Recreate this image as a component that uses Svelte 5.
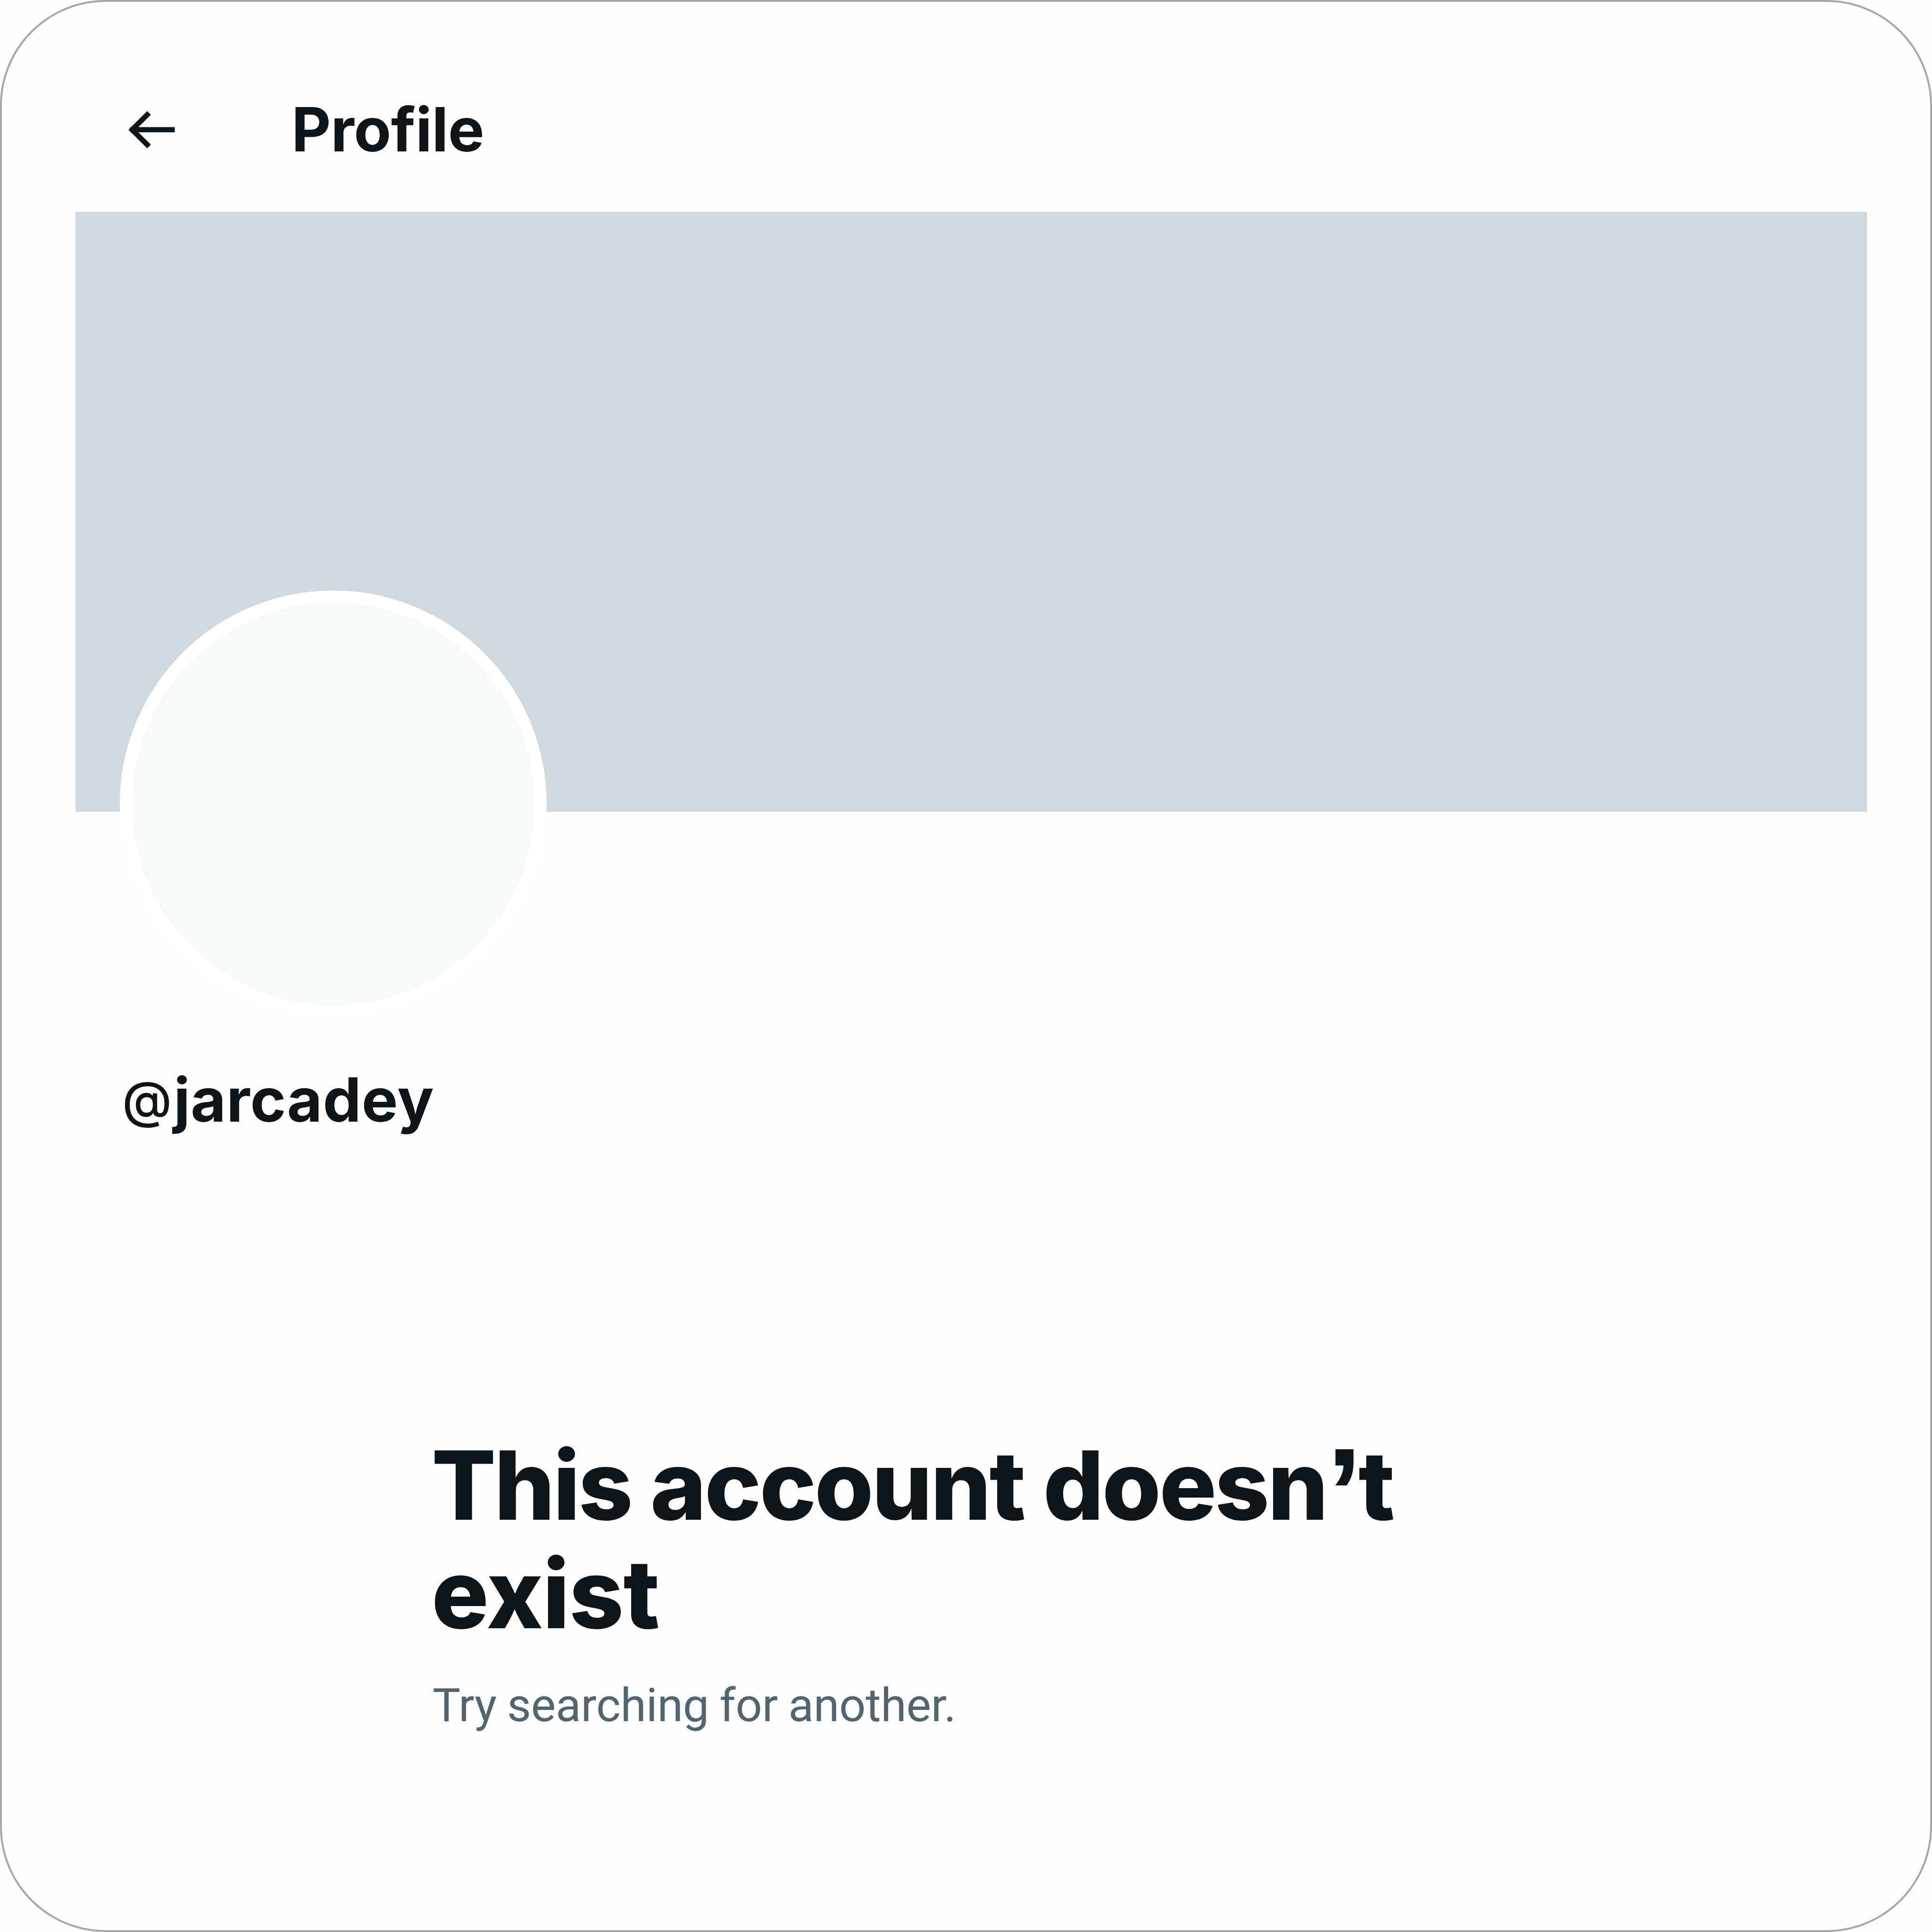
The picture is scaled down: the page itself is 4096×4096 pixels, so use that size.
<script>
  const name = 'jarcadey';
</script>

<main class="card">
  <header class="topbar">
    <svg class="back" viewBox="0 0 104 84" role="img" aria-label="Back">
      <path d="M5 42H99.500M45 6.500L9 42L45 77.500" />
    </svg>
    <h1>Profile</h1>
  </header>

  <div class="banner"></div>

  <section class="identity">
    <div class="avatar"></div>
    <h2><span class="at">@</span>{name}</h2>
  </section>

  <section class="empty">
    <h3>This account doesn<span class="quote">’</span>t <span class="loose">exist</span></h3>
    <p>Try searching for another.</p>
  </section>
</main>

<style>
  :global(body) {
    background: #fefefe;
  }

  .card {
    box-sizing: border-box;
    display: flex;
    flex-direction: column;
    width: 4096px;
    height: 4096px;
    overflow: hidden;
    padding: 0 134px 0 156px;
    border: 4.4px solid #a6a6a6;
    border-radius: 224px;
    background: #fefefe;
    color: #0f1419;
    font-family: Inter, Roboto, sans-serif;
  }

  h1,
  h2,
  h3,
  p {
    margin: 0;
  }

  .topbar {
    box-sizing: border-box;
    display: flex;
    flex: none;
    align-items: flex-start;
    height: 445px;
    padding: 190px 0 0 111px;
  }

  .back {
    width: 104px;
    height: 84px;
    margin-top: 39px;
    fill: none;
    stroke: #0f1419;
    stroke-width: 11;
  }

  h1 {
    margin-left: 243px;
    font-size: 129px;
    font-weight: 700;
    line-height: 160px;
    letter-spacing: -0.400px;
  }

  .banner {
    flex: none;
    height: 1271.500px;
    background: #d1d9df;
  }

  .identity {
    display: flex;
    flex: none;
    flex-direction: column;
    align-items: flex-start;
    margin-top: -469px;
    padding-left: 94px;
  }

  .avatar {
    box-sizing: border-box;
    width: 905px;
    height: 905px;
    border: 26px solid #fff;
    border-radius: 50%;
    background: #f7f9f8;
  }

  h2 {
    height: 160px;
    margin: 94px 0 0 5px;
    font-size: 129px;
    font-weight: 700;
    line-height: 160px;
    letter-spacing: 1px;
    white-space: nowrap;
  }

  .at {
    font-size: 0.83em;
    font-weight: 500;
    line-height: 0;
    letter-spacing: 4px;
    vertical-align: 8px;
  }

  .empty {
    width: 2180px;
    margin: 623px 0 0 755px;
  }

  h3 {
    font-size: 202px;
    font-weight: 800;
    line-height: 230.400px;
    letter-spacing: -3.700px;
  }

  .quote {
    font-family: 'Liberation Sans', sans-serif;
    font-size: 1.35em;
    line-height: 0;
    letter-spacing: -8px;
    vertical-align: -38px;
  }

  .loose {
    letter-spacing: -1px;
  }

  p {
    margin: 61px 0 0 2px;
    color: #536471;
    font-family: Roboto, sans-serif;
    font-size: 99px;
    line-height: 120px;
    letter-spacing: -0.300px;
    word-spacing: -2px;
  }
</style>
